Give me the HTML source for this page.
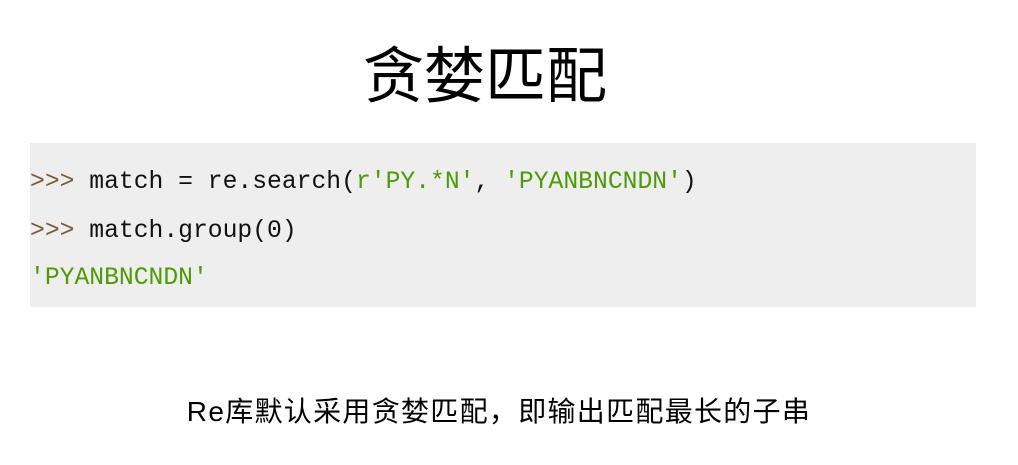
<!DOCTYPE html>
<html><head><meta charset="utf-8"><style>
body{margin:0;width:1018px;height:465px;background:#fff;position:relative;overflow:hidden;font-family:"Liberation Sans","Noto Sans CJK SC",sans-serif}
.t{position:absolute;left:0;width:970px;text-align:center;top:36px;font-size:61px;line-height:80px;color:#000}
.box{position:absolute;left:30px;top:143px;width:946px;height:164px;background:#eeeeee}
.l{position:absolute;left:30px;font-family:"Liberation Mono",monospace;font-size:24.7px;color:#111;white-space:pre}
.p{color:#7a5c3a}.g{color:#4e9a06}
.b{position:absolute;left:0;width:998px;text-align:center;top:392px;font-size:28px;letter-spacing:1.3px;line-height:40px;color:#000}
</style></head><body>
<div class="t">贪婪匹配</div>
<div class="box"></div>
<div class="l" style="top:168px"><span class="p">&gt;&gt;&gt;</span> match = re.search(<span class="g">r'PY.*N'</span>, <span class="g">'PYANBNCNDN'</span>)</div>
<div class="l" style="top:217px"><span class="p">&gt;&gt;&gt;</span> match.group(0)</div>
<div class="l" style="top:264px"><span class="g">'PYANBNCNDN'</span></div>
<div class="b">Re库默认采用贪婪匹配，即输出匹配最长的子串</div>
</body></html>
